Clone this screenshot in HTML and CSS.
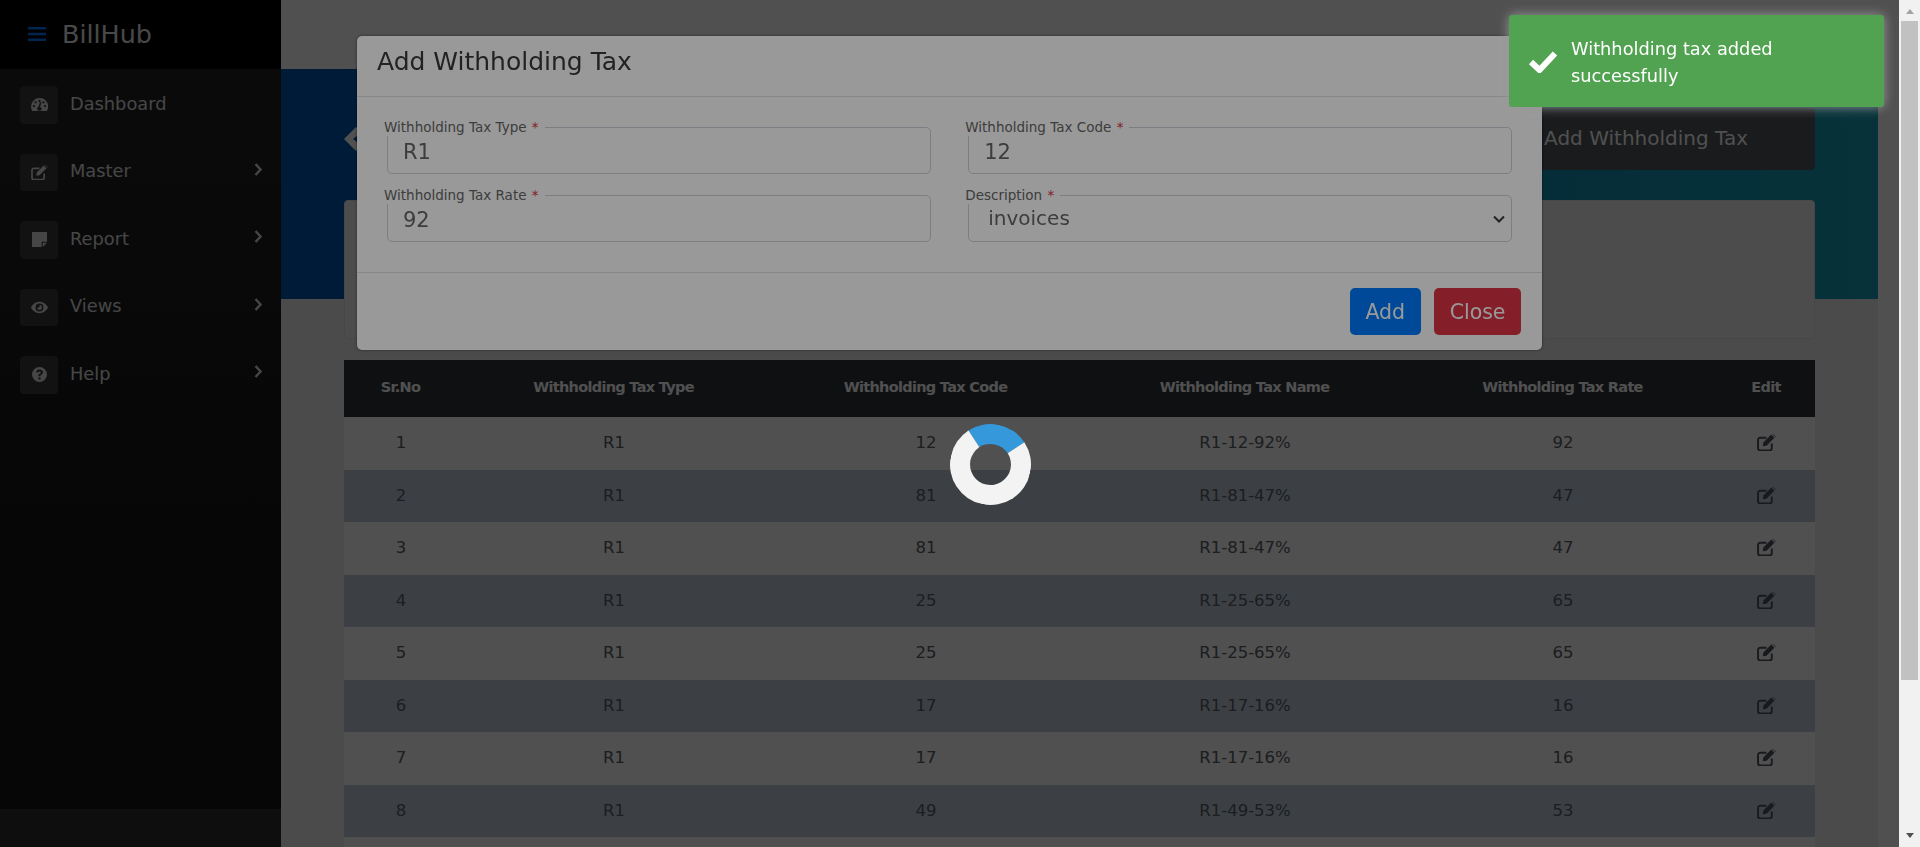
FILE: index.html
```html
<!DOCTYPE html>
<html lang="en">
<head>
    <meta charset="UTF-8">
    <meta name="viewport" content="width=device-width, initial-scale=1.0">
    <title>BillHub - Withholding Tax</title>
    <link rel="stylesheet" href="styles.css">
</head>
<body>

    <aside class="sidebar">
        <div class="brand">
            <svg class="brand-toggle" viewBox="0 0 18 14"><path d="M0 0h18v2.600H0zM0 5.700h18v2.600H0zM0 11.400h18V14H0z"/></svg>
            <span class="brand-name">BillHub</span>
        </div>
        <nav class="side-nav">
            <a class="nav-item">
                <span class="nav-icon"><svg viewBox="0 0 18 14"><path fill-rule="evenodd" d="M9 0a9 9 0 0 0-9 9c0 1.800.5 3.500 1.400 5h15.200A9 9 0 0 0 9 0zm0 2.100a1.200 1.200 0 1 1 0 2.400 1.200 1.200 0 0 1 0-2.400zM3.200 9.800a1.200 1.200 0 1 1 0-2.400 1.200 1.200 0 0 1 0 2.400zm1.700-3.900a1.200 1.200 0 1 1 0-2.400 1.200 1.200 0 0 1 0 2.400zm6.300 5.500a2.300 2.300 0 1 1-3.300-2.100l1.500-4.400a.8.8 0 0 1 1.500.5l-1.400 4.300c1 .2 1.700.9 1.700 1.700zm1.900-5.500a1.200 1.200 0 1 1 0-2.400 1.200 1.200 0 0 1 0 2.400zm1.700 3.900a1.200 1.200 0 1 1 0-2.400 1.200 1.200 0 0 1 0 2.400z"/></svg></span>
                Dashboard
            </a>
            <a class="nav-item has-sub">
                <span class="nav-icon"><svg viewBox="0 0 18 16"><path class="edit-box" d="M9 3.500H3a2 2 0 0 0-2 2v8a2 2 0 0 0 2 2h9a2 2 0 0 0 2-2V9"/><path d="M6 8l7.500-7.500 3 3L9 11l-3.500.5zM14.500 0l.5-.3 2.800 2.800-.3.5z"/></svg></span>
                Master
                <svg class="nav-arrow" viewBox="0 0 8 13"><path d="M1.500 1l5 5.500-5 5.500"/></svg>
            </a>
            <a class="nav-item has-sub">
                <span class="nav-icon"><svg viewBox="0 0 14 14"><path d="M0 0h14v9H9v5H0zM10 10h4l-4 4z"/></svg></span>
                Report
                <svg class="nav-arrow" viewBox="0 0 8 13"><path d="M1.500 1l5 5.500-5 5.500"/></svg>
            </a>
            <a class="nav-item has-sub">
                <span class="nav-icon"><svg viewBox="0 0 18 12"><path fill-rule="evenodd" d="M9 0c4 0 7.300 2.500 9 6-1.700 3.500-5 6-9 6S1.700 9.500 0 6c1.700-3.500 5-6 9-6zm0 1.800a4.200 4.200 0 1 0 0 8.400 4.200 4.200 0 0 0 0-8.400zM9 3.400a2.600 2.600 0 1 1-2.600 2.600c.6.500 1.700.4 2.200-.2.500-.5.600-1.600.4-2.400z"/></svg></span>
                Views
                <svg class="nav-arrow" viewBox="0 0 8 13"><path d="M1.500 1l5 5.500-5 5.500"/></svg>
            </a>
            <a class="nav-item has-sub">
                <span class="nav-icon"><svg viewBox="0 0 14 14"><path fill-rule="evenodd" d="M7 0a7 7 0 1 1 0 14A7 7 0 0 1 7 0zM6 9.700v2h2v-2zM7 2.400c-1.600 0-2.800 1-3 2.500l1.700.4c.1-.7.600-1.200 1.300-1.200s1.200.4 1.200 1c0 .5-.3.800-.9 1.200C6.500 6.400 6 7 6 8.200v.5h1.900v-.3c0-.5.200-.8.800-1.200.9-.6 1.500-1.300 1.500-2.300 0-1.500-1.300-2.500-3.200-2.500z"/></svg></span>
                Help
                <svg class="nav-arrow" viewBox="0 0 8 13"><path d="M1.500 1l5 5.500-5 5.500"/></svg>
            </a>
        </nav>
        <div class="side-footer"></div>
    </aside>

    <div class="main">
        <div class="topbar"></div>
        <div class="content">
            <section class="hero">
                <div class="hero-head">
                    <svg class="back-icon" viewBox="0 0 24 24"><path d="M12 0L0 12l12 12 12-12z"/><path class="back-notch" d="M9 12l5-4v8z"/></svg>
                    <a class="btn-add-tax">Add Withholding Tax</a>
                </div>
                <div class="hero-card"></div>
            </section>

            <table class="tax-table">
                <colgroup>
                    <col class="col-no"><col class="col-type"><col class="col-code"><col class="col-name"><col class="col-rate"><col class="col-edit">
                </colgroup>
                <thead>
                    <tr><th>Sr.No</th><th>Withholding Tax Type</th><th>Withholding Tax Code</th><th>Withholding Tax Name</th><th>Withholding Tax Rate</th><th>Edit</th></tr>
                </thead>
                <tbody id="taxRows"></tbody>
            </table>
        </div>
    </div>

    <div class="scrollbar">
        <span class="sb-btn sb-up"></span>
        <span class="sb-thumb"></span>
        <span class="sb-track"></span>
        <span class="sb-btn sb-down"></span>
    </div>

    <div class="modal-backdrop">
        <div class="modal">
            <div class="modal-header"><h3>Add Withholding Tax</h3></div>
            <div class="modal-body">
                <div class="field">
                    <label>Withholding Tax Type <span class="req">*</span></label>
                    <input type="text" value="R1">
                </div>
                <div class="field">
                    <label>Withholding Tax Code <span class="req">*</span></label>
                    <input type="text" value="12">
                </div>
                <div class="field">
                    <label>Withholding Tax Rate <span class="req">*</span></label>
                    <input type="text" value="92">
                </div>
                <div class="field">
                    <label>Description <span class="req">*</span></label>
                    <select><option>invoices</option></select>
                    <svg class="select-chevron" viewBox="0 0 12 8"><path d="M1 1.500l5 5 5-5"/></svg>
                </div>
            </div>
            <div class="modal-footer">
                <button class="btn btn-primary">Add</button>
                <button class="btn btn-danger">Close</button>
            </div>
        </div>
    </div>

    <div class="loader-overlay"><div class="spinner"></div></div>

    <div class="toast">
        <svg class="toast-check" viewBox="0 0 30 23"><path d="M3 12l8.500 8L27 3.500"/></svg>
        <span class="toast-text">Withholding tax added successfully</span>
    </div>

<script>
// rows from the withholding tax list
const rows = [
    ["R1", "12", "92"], ["R1", "81", "47"], ["R1", "81", "47"], ["R1", "25", "65"],
    ["R1", "25", "65"], ["R1", "17", "16"], ["R1", "17", "16"], ["R1", "49", "53"]
];
const editIcon = '<svg class="edit-icon" viewBox="0 0 18 16"><path class="edit-box" d="M9 3.500H3a2 2 0 0 0-2 2v8a2 2 0 0 0 2 2h9a2 2 0 0 0 2-2V9"/><path d="M6 8l7.500-7.500 3 3L9 11l-3.500.5zM14.500 0l.5-.3 2.800 2.800-.3.5z"/></svg>';
let html = rows.map((r, i) =>
    `<tr><td>${i + 1}</td><td>${r[0]}</td><td>${r[1]}</td><td>${r[0]}-${r[1]}-${r[2]}%</td><td>${r[2]}</td><td>${editIcon}</td></tr>`
).join("");
// next row starts right at the fold
html += '<tr><td colspan="6"></td></tr>';
document.getElementById("taxRows").innerHTML = html;
</script>

</body>
</html>
```

FILE: styles.css
```css
* {
    margin: 0;
    padding: 0;
    box-sizing: border-box;
}

body {
    font-family: "DejaVu Sans", sans-serif;
    display: flex;
    height: 100vh;
    overflow: hidden;
    background: #ffffff;
    color: #5a6068;
}

/* sidebar */
.sidebar {
    flex: 0 0 281px;
    display: flex;
    flex-direction: column;
    background: linear-gradient(#262626, #141414 70%);
    color: #e0e0e0;
}

.brand {
    height: 69px;
    flex: none;
    display: flex;
    align-items: center;
    gap: 16px;
    padding: 0 0 2px 28px;
    background: #000000;
}

.brand-toggle {
    width: 18px;
    height: 14px;
    fill: #007bff;
}

.brand-name {
    font-size: 25.4px;
    color: #e8e8e8;
}

.side-nav {
    flex: 1;
    padding-top: 17px;
    display: flex;
    flex-direction: column;
    gap: 30px;
}

.nav-item {
    display: flex;
    align-items: center;
    gap: 12px;
    height: 37.5px;
    padding: 0 19px 3px 20px;
    font-size: 17.8px;
}

.nav-icon {
    flex: 0 0 38px;
    height: 37.5px;
    margin-bottom: -3px;
    display: flex;
    align-items: center;
    justify-content: center;
    background: #3a3a3a;
    border-radius: 4px;
}

.nav-icon svg {
    width: 17px;
    height: 15px;
    fill: #e0e0e0;
}

.nav-arrow {
    width: 8px;
    height: 13px;
    margin-left: auto;
    margin-top: -3px;
    fill: none;
    stroke: #e0e0e0;
    stroke-width: 2.4;
}

.side-footer {
    flex: 0 0 38px;
    background: #2e2e2e;
}

/* main column */
.main {
    flex: 1;
    min-width: 0;
    overflow: hidden;
    background: #ffffff;
}

.topbar {
    height: 69px;
}

.content {
    margin-right: 21px;
    height: 778px;
    background: #f0f0f0;
}

.hero {
    height: 230px;
    padding: 39px 63px 0;
    background: linear-gradient(90deg, #0056b3, #17a2b8);
}

.hero-head {
    height: 62px;
    display: flex;
    align-items: center;
    justify-content: space-between;
}

.back-icon {
    width: 24px;
    height: 24px;
    fill: #ffffff;
}

.back-notch {
    fill: #0056b3;
}

.btn-add-tax {
    height: 62px;
    display: flex;
    align-items: center;
    padding: 0 67px 2px;
    font-size: 20px;
    color: #ffffff;
    background: #53565d;
    border-radius: 4px;
}

.hero-card {
    height: 139px;
    margin-top: 30px;
    background: #f4f4f4;
    border: 1px solid #e4e4e4;
    border-radius: 4px;
}

.tax-table {
    width: 1471px;
    margin: 61px 0 0 63px;
    border-collapse: collapse;
    table-layout: fixed;
}

.col-no { width: 112px; }
.col-type { width: 314px; }
.col-code { width: 310px; }
.col-name { width: 328px; }
.col-rate { width: 308px; }
.col-edit { width: 99px; }

.tax-table th {
    height: 57px;
    padding: 0 0 4px 1px;
    font-size: 14.5px;
    font-weight: bold;
    letter-spacing: -0.7px;
    color: #ffffff;
    background: #30363d;
    text-align: center;
}

.tax-table td {
    height: 52.5px;
    padding: 0 0 1px 2px;
    font-size: 16.5px;
    text-align: center;
    background: #ffffff;
}

.tax-table tbody tr:nth-child(even) td {
    background: #c0d0dd;
}

.edit-icon {
    display: block;
    width: 19px;
    height: 17px;
    margin: 0 auto;
    fill: #50555f;
}

.edit-box {
    fill: none;
    stroke: #50555f;
    stroke-width: 1.8;
}

.nav-icon .edit-box {
    stroke: #e0e0e0;
}

/* painted scrollbar, sits outside the dimmed area */
.scrollbar {
    flex: 0 0 21px;
    display: flex;
    flex-direction: column;
    align-items: center;
    background: #f1f1f1;
}

.sb-btn {
    flex: 0 0 21px;
    width: 0;
    height: 0;
    border-left: 4.5px solid transparent;
    border-right: 4.5px solid transparent;
}

.sb-up {
    flex-basis: 5px;
    margin: 9px 0 7px;
    border-bottom: 5px solid #a3a3a3;
}

.sb-down {
    flex-basis: 5px;
    margin: 0 0 9px;
    border-top: 5px solid #505050;
}

.sb-thumb {
    flex: 0 0 659px;
    width: 17px;
    background: #c1c1c1;
}

.sb-track {
    flex: 1;
}

/* modal */
.modal-backdrop {
    position: fixed;
    inset: 0 21px 0 0;
    padding: 36px 0 0 357px;
    background: rgba(0, 0, 0, 0.48);
}

.modal {
    width: 1185px;
    background: #ffffff;
    border-radius: 5px;
    box-shadow: 0 0 3px rgba(0, 0, 0, 0.5);
    color: #666666;
}

.modal-header {
    height: 61px;
    display: flex;
    align-items: center;
    padding: 0 20px 9px;
    border-bottom: 1px solid #dee2e6;
}

.modal-header h3 {
    font-size: 25px;
    font-weight: normal;
    color: #3a3a3a;
}

.modal-body {
    display: grid;
    grid-template-columns: 1fr 1fr;
    gap: 21px 37.5px;
    padding: 30px 30px 30px 30px;
}

.field {
    position: relative;
    display: flex;
}

.field label {
    position: absolute;
    top: -9px;
    left: -3px;
    padding-right: 6px;
    font-size: 13.5px;
    background: #ffffff;
    line-height: 18px;
}

.req {
    margin-left: 1px;
    color: #dc3545;
}

.field input, .field select {
    width: 100%;
    height: 47px;
    font-family: inherit;
    color: #666666;
    background: #ffffff;
    border: 1px solid #ced4da;
    border-radius: 5px;
}

.field input {
    padding: 2px 15px 0;
    font-size: 21px;
}

.field select {
    appearance: none;
    padding: 0 19px 2px;
    font-size: 20px;
}

.select-chevron {
    position: absolute;
    right: 7px;
    top: 20px;
    width: 12px;
    height: 8px;
    fill: none;
    stroke: #3a3a3a;
    stroke-width: 2;
}

.modal-footer {
    display: flex;
    justify-content: flex-end;
    gap: 13.5px;
    padding: 15px 21px;
    border-top: 1px solid #dee2e6;
}

.btn {
    height: 47px;
    padding: 0 15.5px;
    font-family: inherit;
    font-size: 20.5px;
    color: #ffffff;
    border: none;
    border-radius: 5px;
}

.btn-primary {
    background: #007bff;
}

.btn-danger {
    background: #dc3545;
}

/* loading state */
.loader-overlay {
    position: fixed;
    inset: 0 21px 0 0;
    background: rgba(0, 0, 0, 0.4);
}

.spinner {
    position: absolute;
    top: 50%;
    left: 50%;
    width: 81px;
    height: 81px;
    border: 20px solid #f3f3f3;
    border-top-color: #3498db;
    border-radius: 50%;
    transform: rotate(12deg);
}

/* toast */
.toast {
    position: fixed;
    top: 15px;
    right: 36px;
    width: 375px;
    height: 92px;
    display: flex;
    align-items: center;
    gap: 13px;
    padding: 1px 20px 0 19px;
    background: #51a351;
    color: #ffffff;
    border-radius: 3px;
    box-shadow: 0 0 12px #999999;
    font-size: 17.8px;
    line-height: 27px;
}

.toast-check {
    flex: none;
    width: 30px;
    height: 23px;
    margin-top: -1px;
    fill: none;
    stroke: #ffffff;
    stroke-width: 6;
}

.toast-text {
    width: 270px;
}
```
